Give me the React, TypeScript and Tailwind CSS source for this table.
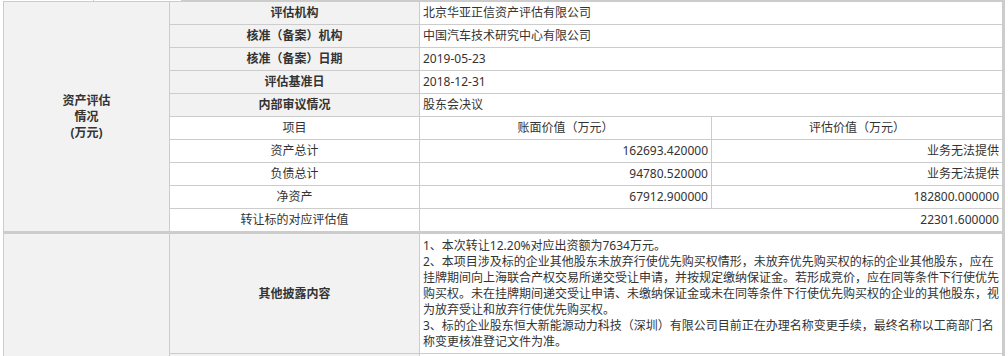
import { Fragment } from "react";

const label = "bg-[#f2f2f2] font-bold flex items-center justify-center";
const value = "bg-white flex items-center pl-[3px] pr-[2px]";
const cell = "bg-white flex items-center px-[3px]";

const basics = [
  { k: "评估机构", v: "北京华亚正信资产评估有限公司" },
  { k: "核准（备案）机构", v: "中国汽车技术研究中心有限公司" },
  { k: "核准（备案）日期", v: "2019-05-23" },
  { k: "评估基准日", v: "2018-12-31" },
  { k: "内部审议情况", v: "股东会决议" },
];

const figures = [
  { k: "资产总计", book: "162693.420000", est: "业务无法提供" },
  { k: "负债总计", book: "94780.520000", est: "业务无法提供" },
  { k: "净资产", book: "67912.900000", est: "182800.000000" },
];

const notes = [
  "1、本次转让12.20%对应出资额为7634万元。",
  "2、本项目涉及标的企业其他股东未放弃行使优先购买权情形，未放弃优先购买权的标的企业其他股东，应在挂牌期间向上海联合产权交易所递交受让申请，并按规定缴纳保证金。若形成竞价，应在同等条件下行使优先购买权。未在挂牌期间递交受让申请、未缴纳保证金或未在同等条件下行使优先购买权的企业的其他股东，视为放弃受让和放弃行使优先购买权。",
  "3、标的企业股东恒大新能源动力科技（深圳）有限公司目前正在办理名称变更手续，最终名称以工商部门名称变更核准登记文件为准。",
];

export default function App() {
  return (
    <div className="w-[1008px] h-[356px] overflow-hidden bg-white text-[12px] text-[#333] font-['Noto_Sans','Noto_Sans_CJK_SC',sans-serif]">
      <div className="flex h-px">
        <div className="w-[93px] bg-white" />
        <div className="w-px bg-[#ccc]" />
        <div className="w-[87px] bg-white" />
        <div className="w-[824px] bg-[#ccc]" />
      </div>

      <div className="ml-[3px] w-[1002px] bg-[#ccc] pt-px pl-px pr-[3px] flex flex-col gap-[3px]">
        {/* 资产评估情况 */}
        <div className="grid grid-cols-[165px_249px_291px_290px] auto-rows-[22px] gap-px">
          <div className="row-span-10 bg-[#f2f2f2] font-bold flex flex-col items-center justify-center leading-4 text-center">
            <span>资产评估</span>
            <span>情况</span>
            <span>(万元)</span>
          </div>
          {basics.map((r) => (
            <Fragment key={r.k}>
              <div className={label}>{r.k}</div>
              <div className={`${value} col-span-2`}>{r.v}</div>
            </Fragment>
          ))}
          <div className={`${cell} justify-center`}>项目</div>
          <div className={`${cell} justify-center`}>账面价值（万元）</div>
          <div className={`${cell} justify-center`}>评估价值（万元）</div>
          {figures.map((r) => (
            <Fragment key={r.k}>
              <div className={`${cell} justify-center`}>{r.k}</div>
              <div className={`${cell} justify-end`}>{r.book}</div>
              <div className={`${cell} justify-end`}>{r.est}</div>
            </Fragment>
          ))}
          <div className={`${cell} justify-center`}>转让标的对应评估值</div>
          <div className={`${cell} justify-end col-span-2`}>22301.600000</div>
        </div>

        {/* 其他 */}
        <div className="grid grid-cols-[165px_249px_582px] grid-rows-[119px_22px] gap-px">
          <div className="row-span-2 bg-[#f2f2f2]" />
          <div className={label}>其他披露内容</div>
          <div className={`${value} leading-4`}>
            <div>
              {notes.map((n) => (
                <div key={n}>{n}</div>
              ))}
            </div>
          </div>
          <div className={label} />
          <div className={value} />
        </div>
      </div>
    </div>
  );
}
